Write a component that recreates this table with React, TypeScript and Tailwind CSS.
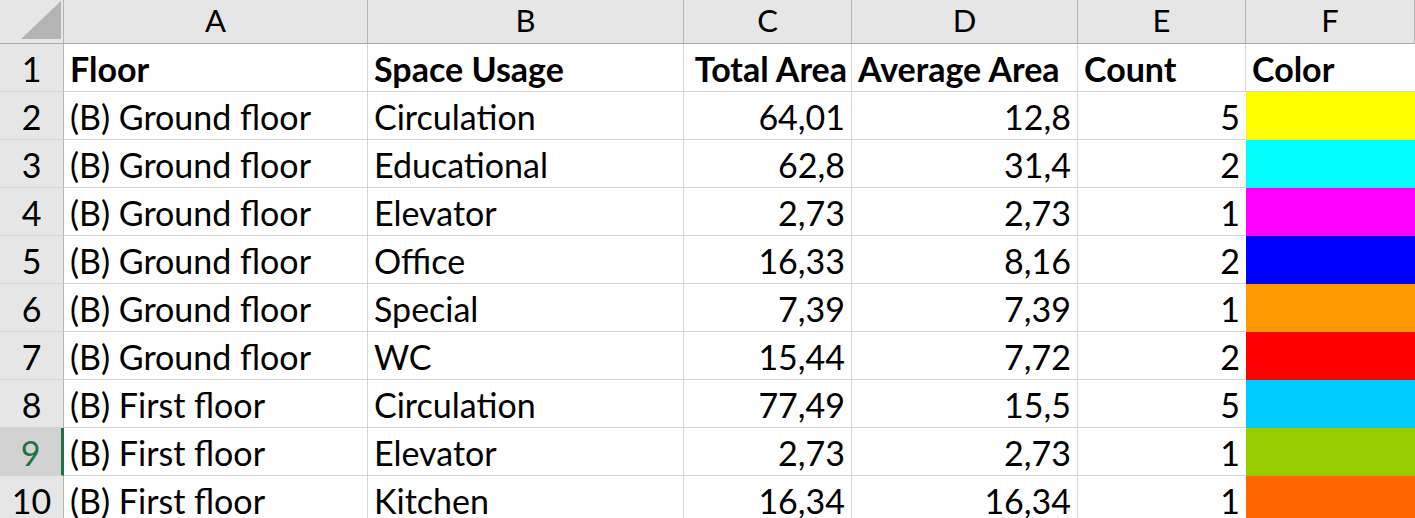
import React from "react";

const cols = ["A", "B", "C", "D", "E", "F"];

const rows: [string, string, string, string, string, string][] = [
  ["(B) Ground floor", "Circulation", "64,01", "12,8", "5", "bg-[#ffff00]"],
  ["(B) Ground floor", "Educational", "62,8", "31,4", "2", "bg-[#00ffff]"],
  ["(B) Ground floor", "Elevator", "2,73", "2,73", "1", "bg-[#ff00ff]"],
  ["(B) Ground floor", "Office", "16,33", "8,16", "2", "bg-[#0000ff]"],
  ["(B) Ground floor", "Special", "7,39", "7,39", "1", "bg-[#ff9900]"],
  ["(B) Ground floor", "WC", "15,44", "7,72", "2", "bg-[#ff0000]"],
  ["(B) First floor", "Circulation", "77,49", "15,5", "5", "bg-[#00ccff]"],
  ["(B) First floor", "Elevator", "2,73", "2,73", "1", "bg-[#99cc00]"],
  ["(B) First floor", "Kitchen", "16,34", "16,34", "1", "bg-[#ff6600]"],
];

const cell = "flex items-end pb-[5px] border-r border-b border-[#d4d4d4] whitespace-nowrap";

function RowHead({ n, selected }: { n: number; selected?: boolean }) {
  return (
    <div
      className={`flex items-end justify-center pb-[5px] border-b border-b-[#d4d4d4] ${
        selected
          ? "bg-[#d2d2d2] text-[#217346] border-r-[3px] border-r-[#217346]"
          : "bg-[#e6e6e6] text-black border-r border-r-[#b5b5b5]"
      }`}
    >
      {n}
    </div>
  );
}

export default function App() {
  return (
    <div
      className="w-[1415px] h-[518px] overflow-hidden bg-white text-black text-[34px] leading-none"
      style={{ fontFamily: "Lato, 'Open Sans', sans-serif" }}
    >
      <div className="grid grid-cols-[64px_304px_316px_168px_226px_168px_1fr] grid-rows-[44px] auto-rows-[48px]">
        {/* column headers */}
        <div className="relative bg-[#e6e6e6] border-r border-b border-r-[#b5b5b5] border-b-[#ababab]">
          <svg className="absolute right-[2px] bottom-[4px]" width="40" height="38" viewBox="0 0 40 38">
            <polygon points="40,0 40,38 0,38" fill="#b4b4b4" />
          </svg>
        </div>
        {cols.map((c) => (
          <div
            key={c}
            className="flex items-end justify-center pb-[7px] text-[31px] bg-[#e6e6e6] border-r border-b border-r-[#b5b5b5] border-b-[#ababab]"
          >
            {c}
          </div>
        ))}

        {/* header row */}
        <RowHead n={1} />
        <div className={`${cell} px-[6px] font-bold`}>Floor</div>
        <div className={`${cell} px-[6px] font-bold`}>Space Usage</div>
        <div className={`${cell} justify-end px-[4px] font-bold`}>Total Area</div>
        <div className={`${cell} px-[6px] font-bold`}>Average Area</div>
        <div className={`${cell} px-[6px] font-bold`}>Count</div>
        <div className={`${cell} px-[6px] font-bold border-r-0`}>Color</div>

        {rows.map((r, i) => (
          <React.Fragment key={i}>
            <RowHead n={i + 2} selected={i + 2 === 9} />
            <div className={`${cell} px-[6px]`}>{r[0]}</div>
            <div className={`${cell} px-[6px]`}>{r[1]}</div>
            <div className={`${cell} justify-end px-[6px]`}>{r[2]}</div>
            <div className={`${cell} justify-end px-[6px]`}>{r[3]}</div>
            <div className={`${cell} justify-end px-[6px] border-r-0`}>{r[4]}</div>
            <div className={r[5]} />
          </React.Fragment>
        ))}
      </div>
    </div>
  );
}
